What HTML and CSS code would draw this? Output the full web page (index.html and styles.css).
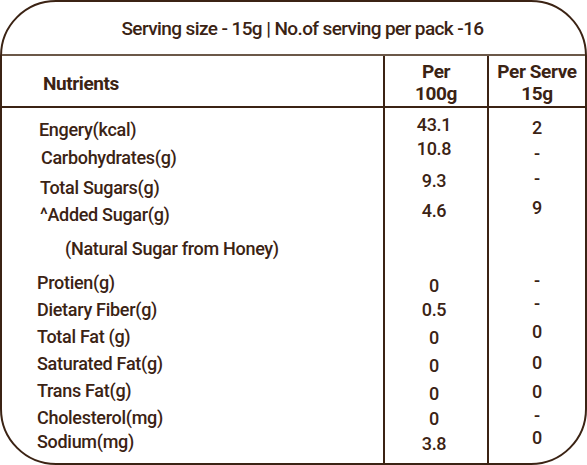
FILE: index.html
```html
<!DOCTYPE html>
<html lang="en">
<head>
  <meta charset="UTF-8" />
  <meta name="viewport" content="width=device-width, initial-scale=1.0"/>
  <title>Nutrition Facts</title>
  <link rel="stylesheet" href="styles.css">
</head>
<body>
  <div class="label">
    <div class="serving">Serving size - 15g | No.of serving per pack -16</div>

    <div class="table">
      <div class="head name-head">Nutrients</div>
      <div class="head">Per<br>100g</div>
      <div class="head">Per Serve<br>15g</div>

      <div class="col name-col">
        <div class="line">Engery(kcal)</div>
        <div class="line">Carbohydrates(g)</div>
        <div class="line">Total Sugars(g)</div>
        <div class="line">^Added Sugar(g)</div>
        <div class="line">(Natural Sugar from Honey)</div>
        <div class="line">Protien(g)</div>
        <div class="line">Dietary Fiber(g)</div>
        <div class="line">Total Fat (g)</div>
        <div class="line">Saturated Fat(g)</div>
        <div class="line">Trans Fat(g)</div>
        <div class="line">Cholesterol(mg)</div>
        <div class="line">Sodium(mg)</div>
      </div>

      <div class="col value-col per100">
        <div class="line">43.1</div>
        <div class="line">10.8</div>
        <div class="line">9.3</div>
        <div class="line">4.6</div>
        <div class="line">0</div>
        <div class="line">0.5</div>
        <div class="line">0</div>
        <div class="line">0</div>
        <div class="line">0</div>
        <div class="line">0</div>
        <div class="line">3.8</div>
      </div>

      <div class="col value-col serve">
        <div class="line">2</div>
        <div class="line">-</div>
        <div class="line">-</div>
        <div class="line">9</div>
        <div class="line">-</div>
        <div class="line">-</div>
        <div class="line">0</div>
        <div class="line">0</div>
        <div class="line">0</div>
        <div class="line">-</div>
        <div class="line">0</div>
      </div>
    </div>
  </div>
</body>
</html>
```

FILE: styles.css
```css
* {
  box-sizing: border-box;
}

body {
  margin: 0;
  background: #ffffff;
  font-family: Roboto, 'Liberation Sans', sans-serif;
  font-weight: 500;
  color: #3b2314;
}

.label {
  width: 587px;
  height: 465px;
  border: 2px solid #3b2314;
  border-radius: 56px;
  overflow: hidden;
  display: flex;
  flex-direction: column;
}

.serving {
  height: 54px;
  border-bottom: 2px solid #6b5848;
  display: flex;
  align-items: center;
  justify-content: center;
  padding-left: 18px;
  font-size: 19px;
  letter-spacing: -0.6px;
}

.table {
  flex: 1;
  display: grid;
  grid-template-columns: 381px 104px 1fr;
  grid-template-rows: 52px 1fr;
}

.head {
  border-bottom: 2px solid #3b2314;
  display: flex;
  flex-direction: column;
  align-items: center;
  justify-content: center;
  padding-top: 3px;
  font-size: 19px;
  font-weight: bold;
  line-height: 22px;
  letter-spacing: -0.4px;
  text-align: center;
}

.name-head {
  align-items: flex-start;
  padding-left: 41px;
  padding-top: 5px;
}

.head + .head,
.value-col {
  border-left: 2px solid #3b2314;
}

.col {
  display: flex;
  flex-direction: column;
  font-size: 18px;
  letter-spacing: -0.3px;
}

.line {
  line-height: 20px;
  white-space: nowrap;
}

/* nutrient names */
.name-col {
  padding: 12px 0 0 35px;
}

.name-col .line {
  margin-top: 7px;
}

.name-col .line:first-child {
  margin-top: 0;
  padding-left: 2px;
}

.name-col .line:nth-child(2) {
  padding-left: 4px;
  margin-top: 8px;
}

.name-col .line:nth-child(3) {
  padding-left: 3px;
  margin-top: 10px;
}

.name-col .line:nth-child(4) {
  padding-left: 3px;
  margin-top: 7px;
}

.name-col .line:nth-child(5) {
  padding-left: 28px;
  margin-top: 14px;
}

.name-col .line:nth-child(6) {
  margin-top: 14px;
}

.name-col .line:nth-child(12) {
  margin-top: 4px;
}

/* values */
.value-col {
  align-items: center;
}

.per100 {
  padding: 7px 4px 0 0;
}

.per100 .line {
  margin-top: 8px;
}

.per100 .line:first-child { margin-top: 0; }
.per100 .line:nth-child(2) { margin-top: 4px; }
.per100 .line:nth-child(3) { margin-top: 12px; }
.per100 .line:nth-child(4) { margin-top: 10px; }
.per100 .line:nth-child(5) { margin-top: 55px; }
.per100 .line:nth-child(6) { margin-top: 4px; }
.per100 .line:nth-child(10),
.per100 .line:nth-child(11) { margin-top: 5px; }

.serve {
  padding: 10px 0 0 0;
}

.serve .line {
  margin-top: 6px;
}

.serve .line:first-child { margin-top: 0; }
.serve .line:nth-child(2) { margin-top: 6px; }
.serve .line:nth-child(3) { margin-top: 5px; }
.serve .line:nth-child(4) { margin-top: 9px; }
.serve .line:nth-child(5) { margin-top: 53px; }
.serve .line:nth-child(6) { margin-top: 3px; }
.serve .line:nth-child(7) { margin-top: 8px; }
.serve .line:nth-child(8) { margin-top: 11px; }
.serve .line:nth-child(9) { margin-top: 9px; }
.serve .line:nth-child(10) { margin-top: 4px; }
.serve .line:nth-child(11) { margin-top: 2px; }
```
